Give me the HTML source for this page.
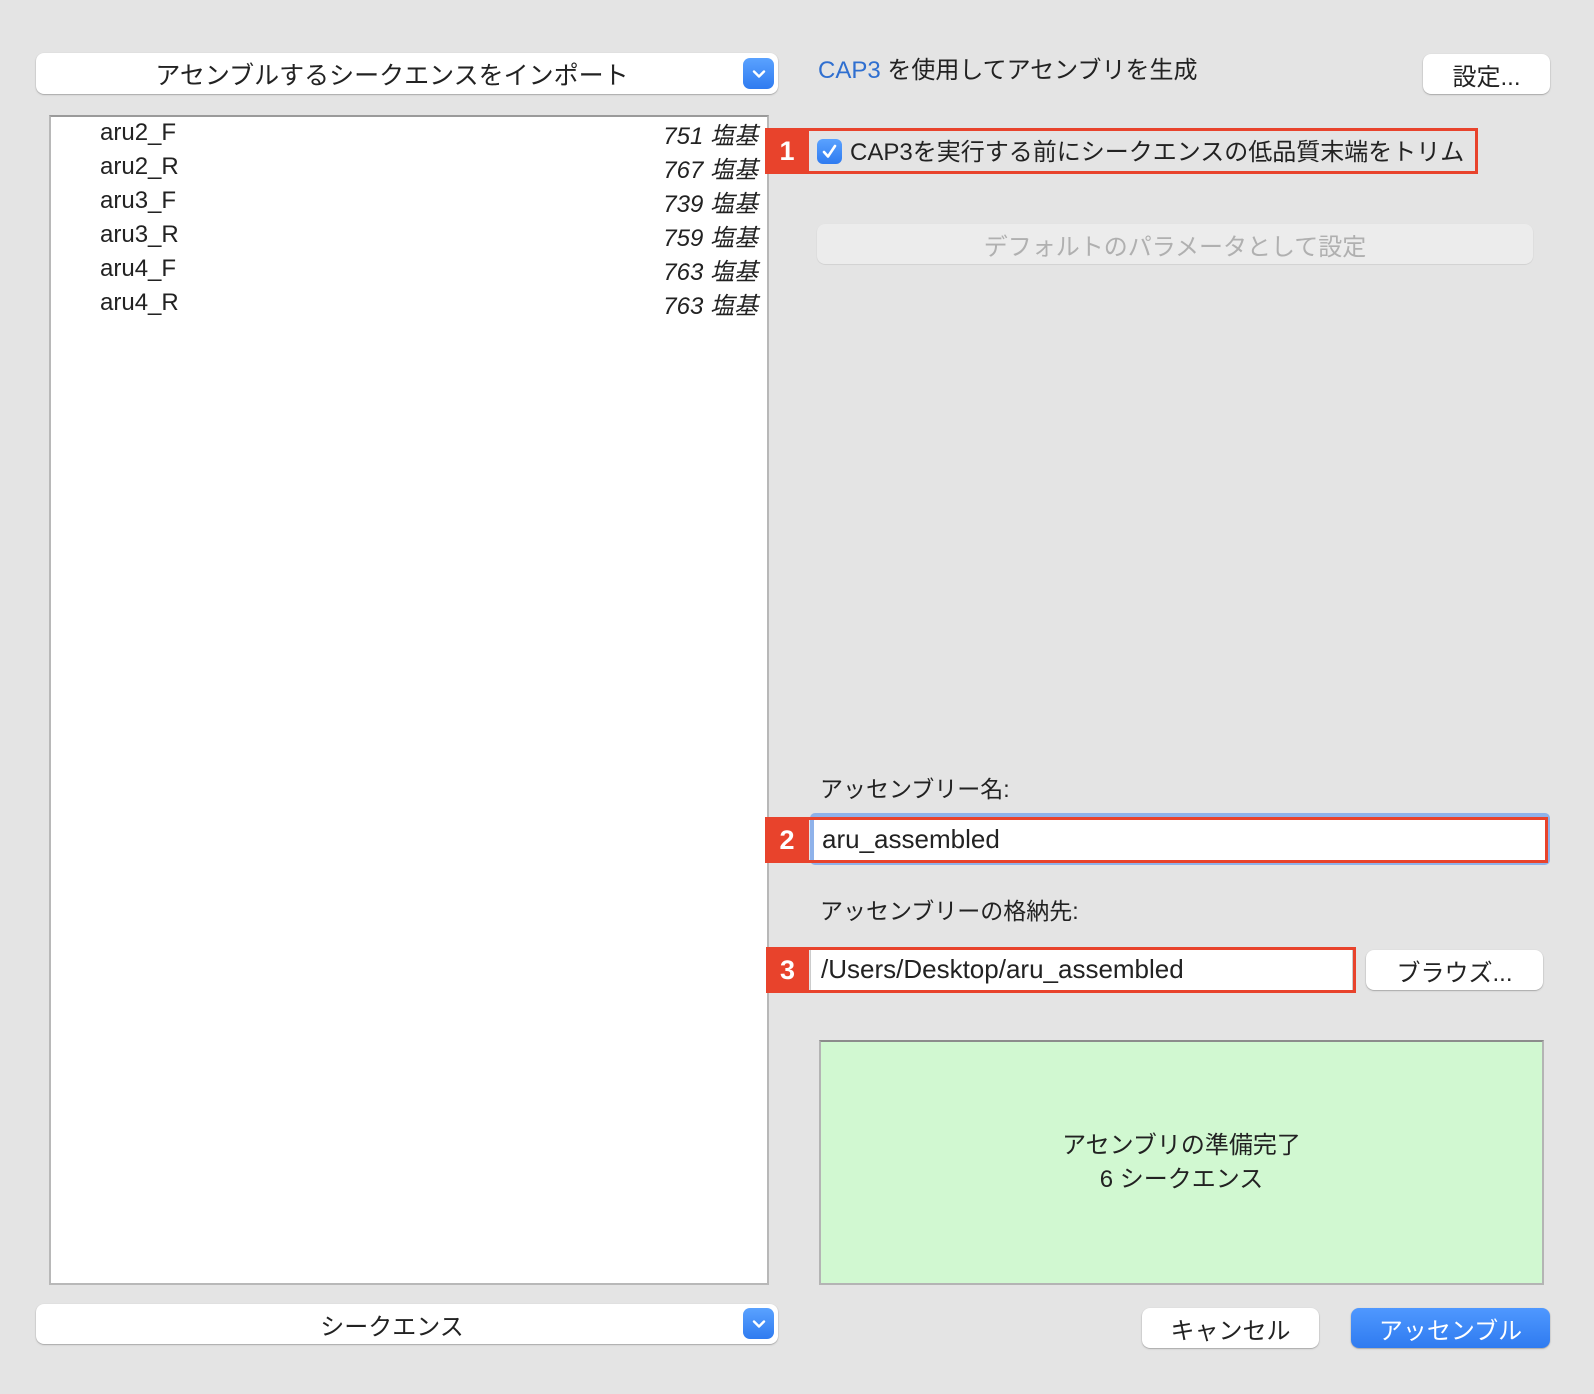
<!DOCTYPE html>
<html><head><meta charset="utf-8"><style>
*{box-sizing:border-box;margin:0;padding:0}
body{width:1594px;height:1394px;background:#e4e4e4;font-family:"Liberation Sans","Noto Sans CJK JP",sans-serif;color:#222;position:relative;overflow:hidden;font-size:23px}
.a{position:absolute}
.btn{position:absolute;background:#fff;border-radius:8px;box-shadow:0 0.5px 1px rgba(0,0,0,.3),0 1px 2px rgba(0,0,0,.12);display:flex;align-items:center;justify-content:center;font-size:24px}
.chev{position:absolute;right:4px;top:5px;width:31px;height:31px;border-radius:7px;background:linear-gradient(#5aa2ff,#2f7bf0);display:flex;align-items:center;justify-content:center}
.row{position:absolute;left:100px;width:658px;height:34px;display:flex;justify-content:space-between;align-items:center;font-size:24px}
.row i{font-style:italic}
.red{position:absolute;border:3px solid #e8432c}
.lab{position:absolute;background:#e8432c;color:#fff;font-weight:bold;font-size:27px;display:flex;align-items:center;justify-content:center}
</style></head><body>
<div class="btn" style="left:36px;top:53px;width:742px;height:41px;font-size:25px;padding-right:30px">アセンブルするシークエンスをインポート
<div class="chev"><svg width="14" height="10" viewBox="0 0 14 10"><path d="M2 2.5L7 7.5L12 2.5" fill="none" stroke="#fff" stroke-width="2.4" stroke-linecap="round" stroke-linejoin="round"/></svg></div></div>
<div class="a" style="left:49px;top:115px;width:720px;height:1170px;background:#fff;border:2px solid #b8b8b8;border-top-color:#9a9a9a"></div>
<div class="row" style="top:116px"><span>aru2_F</span><i>751 塩基</i></div>
<div class="row" style="top:150px"><span>aru2_R</span><i>767 塩基</i></div>
<div class="row" style="top:184px"><span>aru3_F</span><i>739 塩基</i></div>
<div class="row" style="top:218px"><span>aru3_R</span><i>759 塩基</i></div>
<div class="row" style="top:252px"><span>aru4_F</span><i>763 塩基</i></div>
<div class="row" style="top:286px"><span>aru4_R</span><i>763 塩基</i></div>
<div class="btn" style="left:36px;top:1304px;width:742px;height:40px;padding-right:30px">シークエンス
<div class="chev" style="top:4px"><svg width="14" height="10" viewBox="0 0 14 10"><path d="M2 2.5L7 7.5L12 2.5" fill="none" stroke="#fff" stroke-width="2.4" stroke-linecap="round" stroke-linejoin="round"/></svg></div></div>

<div class="a" style="left:818px;top:50px;font-size:24px"><span style="color:#2f6fd0">CAP3</span> を使用してアセンブリを生成</div>
<div class="btn" style="left:1423px;top:54px;width:127px;height:40px">設定...</div>

<div class="red" style="left:765px;top:128px;width:713px;height:46px"></div>
<div class="lab" style="left:765px;top:128px;width:44px;height:46px">1</div>
<div class="a" style="left:817px;top:139px;width:25px;height:25px;border-radius:6px;background:linear-gradient(#5aa2ff,#2f7bf0);display:flex;align-items:center;justify-content:center"><svg width="17" height="17" viewBox="0 0 17 17"><path d="M3 9L7 13.5L14 3" fill="none" stroke="#fff" stroke-width="2.6" stroke-linecap="round" stroke-linejoin="round"/></svg></div>
<div class="a" style="left:850px;top:132px;font-size:24px">CAP3を実行する前にシークエンスの低品質末端をトリム</div>

<div class="a" style="left:817px;top:224px;width:716px;height:40px;border-radius:8px;background:#ececec;box-shadow:0 0.5px 1px rgba(0,0,0,.15);color:#b0b0b0;display:flex;align-items:center;justify-content:center;font-size:24px">デフォルトのパラメータとして設定</div>

<div class="a" style="left:820px;top:770px">アッセンブリー名:</div>
<div class="a" style="left:810px;top:813px;width:740px;height:52px;border:4px solid #8fb2ea;border-radius:5px;background:#fff"></div>
<div class="red" style="left:765px;top:817px;width:783px;height:46px"></div>
<div class="lab" style="left:765px;top:817px;width:44px;height:46px">2</div>
<div class="a" style="left:822px;top:824px;font-size:26px">aru_assembled</div>

<div class="a" style="left:820px;top:892px">アッセンブリーの格納先:</div>
<div class="a" style="left:810px;top:948px;width:543px;height:43px;background:#fff;border:1px solid #ccc"></div>
<div class="red" style="left:766px;top:947px;width:590px;height:46px"></div>
<div class="lab" style="left:766px;top:947px;width:43px;height:46px">3</div>
<div class="a" style="left:821px;top:954px;font-size:26px">/Users/Desktop/aru_assembled</div>
<div class="btn" style="left:1366px;top:950px;width:177px;height:40px">ブラウズ...</div>

<div class="a" style="left:819px;top:1040px;width:725px;height:245px;background:#d1f8d1;border:2px solid #b4b4b4;border-top-color:#8c8c8c;display:flex;flex-direction:column;align-items:center;justify-content:center;line-height:34px;font-size:24px">
<div>アセンブリの準備完了</div><div>6 シークエンス</div></div>

<div class="btn" style="left:1142px;top:1308px;width:177px;height:40px">キャンセル</div>
<div class="btn" style="left:1351px;top:1308px;width:199px;height:40px;background:linear-gradient(#4f98ff,#2f7bf0);color:#fff">アッセンブル</div>
</body></html>
